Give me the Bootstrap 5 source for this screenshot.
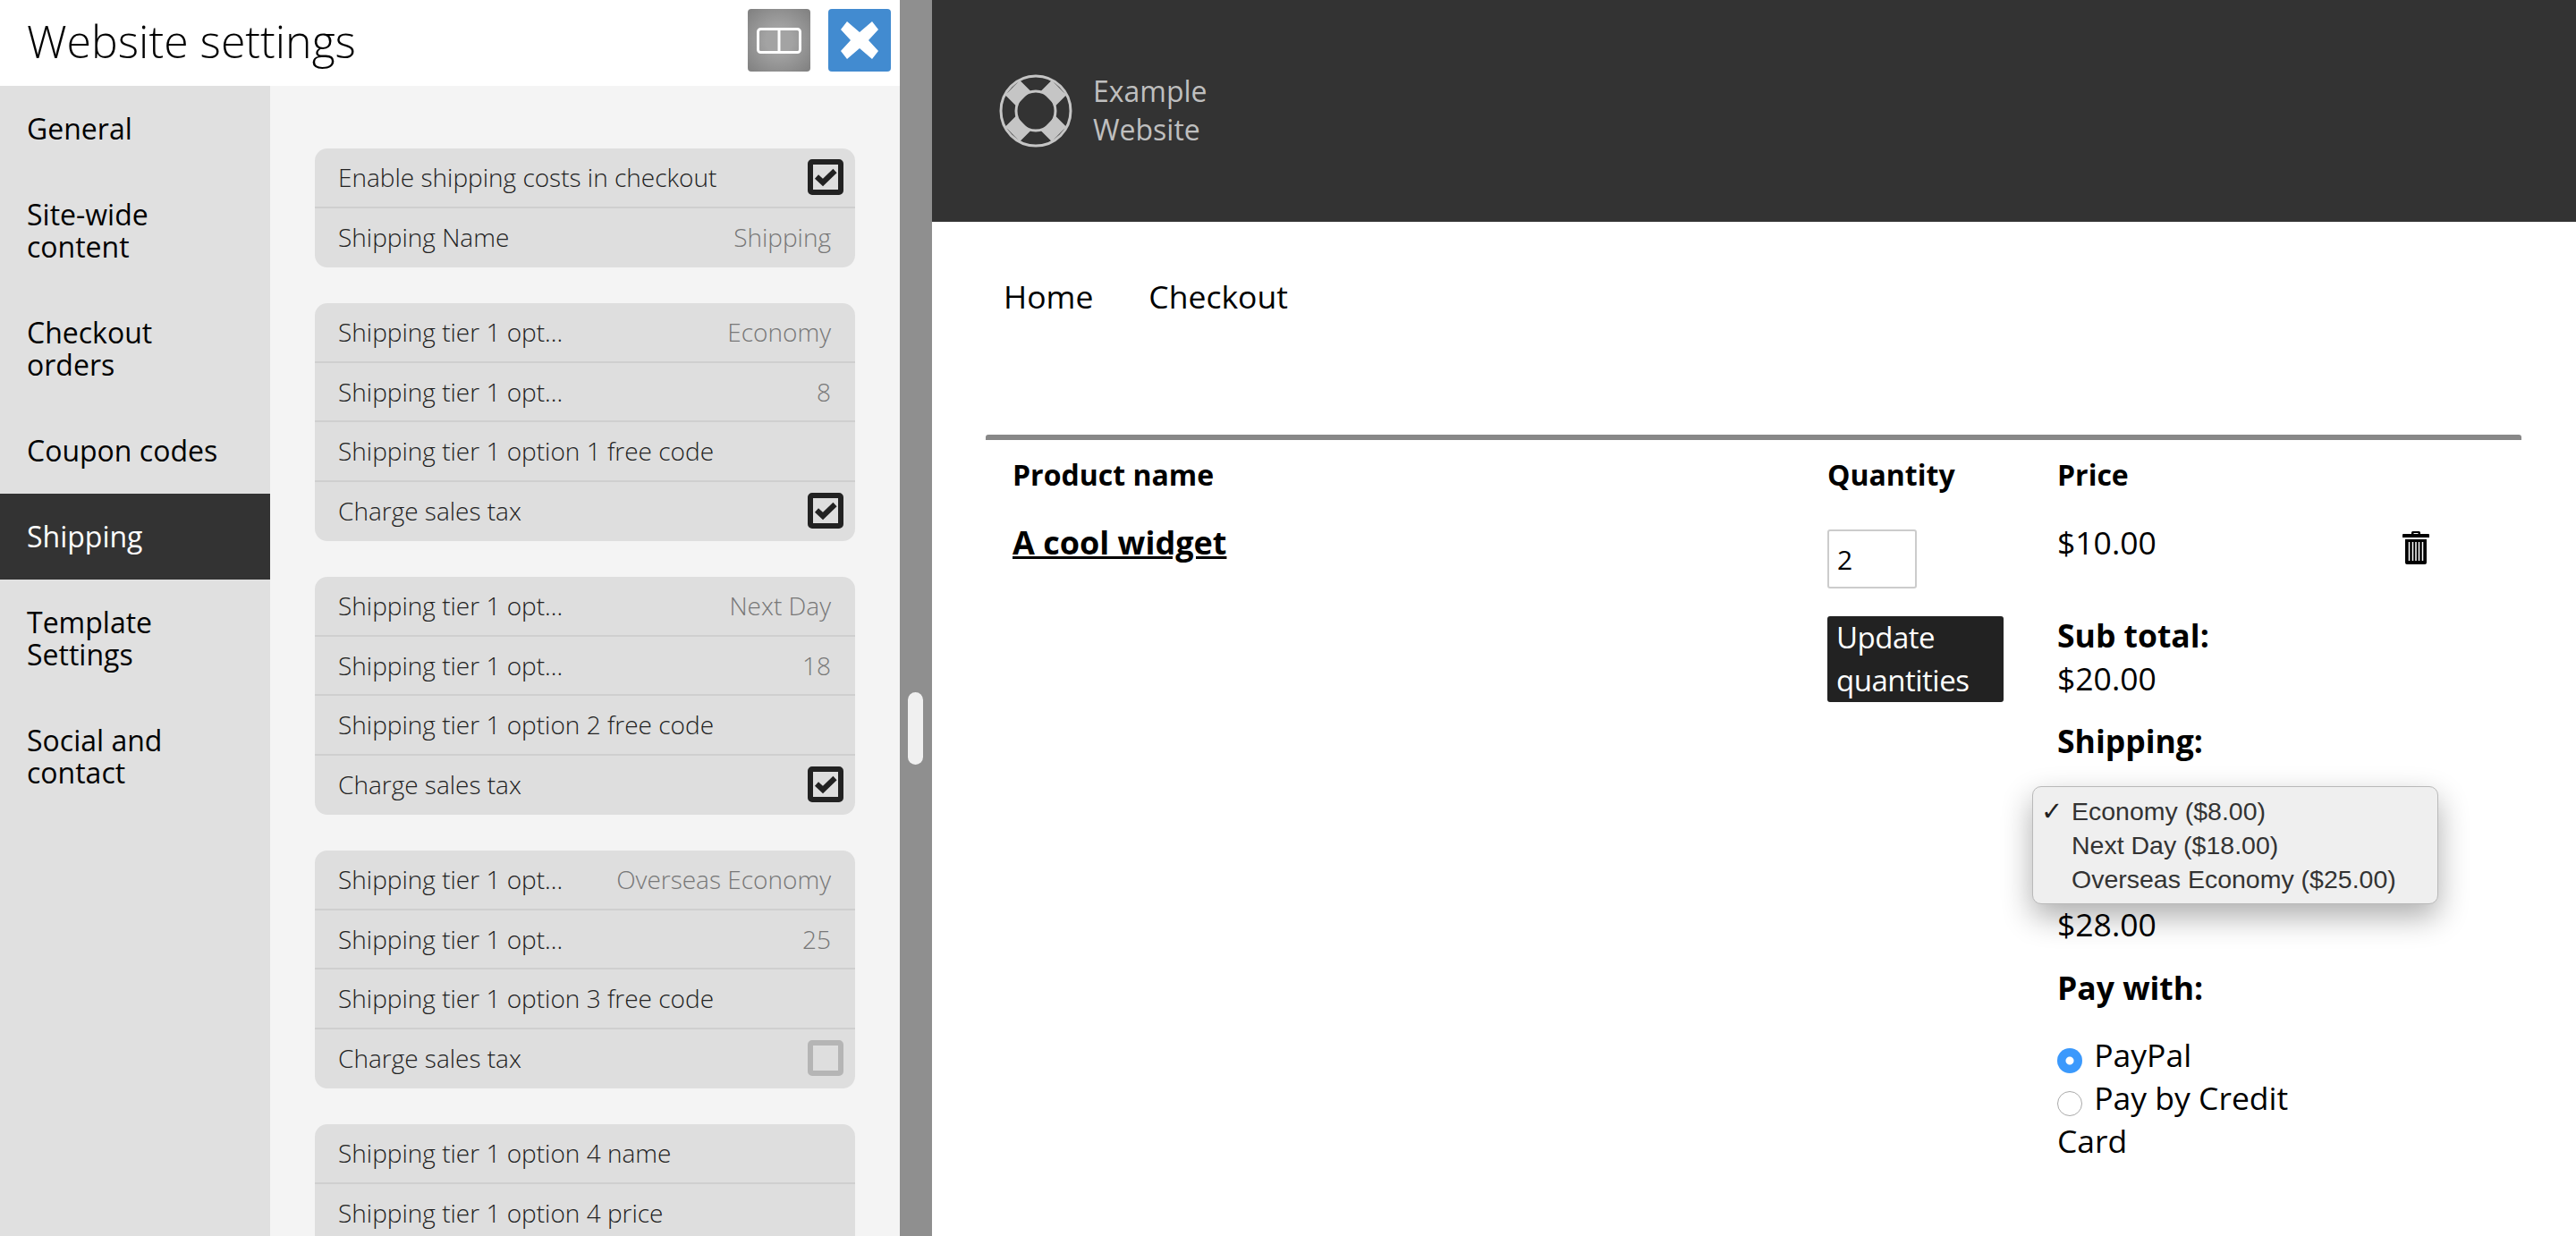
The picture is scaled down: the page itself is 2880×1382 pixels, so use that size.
<!DOCTYPE html>
<html lang="en">

<head>
    <meta charset="UTF-8">
    <meta name="viewport" content="width=device-width, initial-scale=1.0">
    <title>Website settings</title>
    <link href="https://cdn.jsdelivr.net/npm/bootstrap@5.3.2/dist/css/bootstrap.min.css" rel="stylesheet">

    <style>
        html, body {
            height: 100%;
            overflow: hidden;
        }

        body {
            font-family: "Open Sans", sans-serif;
            font-size: 35px;
            line-height: 48px;
            color: #000;
        }

        /* settings panel */
        .settings-pane {
            width: 1006px;
            flex: none;
        }

        .settings-head {
            height: 96px;
            flex: none;
            padding: 10px 10px 0 30px;
            background: #fff;
        }

        .settings-title {
            font-size: 50px;
            font-weight: 300;
            line-height: 72px;
            margin: 0;
        }

        .head-btn {
            width: 70px;
            height: 70px;
            padding: 0;
            border: 0;
            border-radius: 4px;
        }

        .head-btn-layout {
            background: radial-gradient(circle, #a3a3a3 30%, #7f7f7f 100%);
            margin-right: 20px;
        }

        .head-btn-close {
            background: #428bd0;
        }

        .settings-side {
            width: 302px;
            flex: none;
            background: #e0e0e0;
        }

        .settings-side .nav-link {
            padding: 30px 50px 30px 30px;
            font-size: 32px;
            line-height: 36px;
            color: #000;
        }

        .settings-side .nav-link.active {
            background: #333;
            color: #fff;
        }

        .settings-body {
            background: #f4f4f4;
            padding: 70px 50px 0;
        }

        .opt-group {
            --bs-list-group-bg: #dedede;
            --bs-list-group-border-width: 0;
            --bs-list-group-border-radius: 14px;
            margin-bottom: 40px;
        }

        .opt-group .list-group-item {
            height: 66.5px;
            padding: 0 13px 0 26px;
            border-bottom: 2px solid #cfcfcf;
            font-size: 28px;
            font-weight: 300;
            line-height: 40px;
            color: #222;
        }

        .opt-group .list-group-item:last-child {
            border-bottom-color: transparent;
        }

        .opt-value {
            color: #777;
            padding-right: 14px;
        }

        .tick-box {
            width: 40px;
            height: 40px;
            border: 6px solid #222;
            border-radius: 5px;
        }

        .tick-box svg {
            overflow: visible;
        }

        .tick-box-off {
            border-color: #b5b5b5;
        }

        .pane-splitter {
            width: 36px;
            flex: none;
            background: #8f8f8f;
            padding-top: 774px;
        }

        .splitter-thumb {
            width: 17px;
            height: 81px;
            margin-left: 9px;
            border-radius: 9px;
            background: #f0f0f0;
        }

        /* example site */
        .site-head {
            height: 248px;
            background: #333;
            padding: 83px 0 0 75px;
            color: #bfbfbf;
            font-size: 32px;
            line-height: 43px;
        }

        .site-name {
            margin: -3px 0 0 23px;
        }

        .site-nav {
            padding: 59px 0 0 80px;
            gap: 62px;
        }

        .site-nav .nav-link {
            padding: 0;
            font-size: 35.500px;
            line-height: 48px;
            color: #000;
        }

        .cart-wrap {
            margin: 131px 61px 0 60px;
            border-top: 6px solid #888;
            border-radius: 3px;
        }

        .cart-table {
            --bs-table-bg: transparent;
            --bs-table-color: #000;
            table-layout: fixed;
            margin: 0;
        }

        .cart-table th, .cart-table td {
            padding: 0 30px;
            font-size: 32px;
            line-height: 48px;
            vertical-align: top;
        }

        .cart-table th {
            padding-top: 15px;
            padding-bottom: 27px;
            font-weight: 700;
        }

        .cart-table td {
            font-size: 35.500px;
            padding-top: 0;
        }

        .cell-qty { width: 258px; }
        .cell-price { width: 385px; }
        .cell-bin { width: 163px; }
        .cell-price-pad { margin-left: -1px; }

        .product-link {
            font-size: 36px;
            font-weight: 700;
            color: #000;
        }

        .qty-input {
            width: 100px;
            height: 66px;
            padding: 0 9px;
            border: 2px solid #ccc;
            border-radius: 3px;
            font-size: 30px;
            margin-top: 10px;
        }

        .update-btn {
            display: block;
            width: 197px;
            margin-top: 31px;
            padding: 0 10px;
            border: 0;
            border-radius: 3px;
            background: #222;
            color: #fff;
            font-size: 33px;
            font-weight: 400;
            line-height: 48px;
            letter-spacing: -.5px;
            text-align: left;
        }

        .sum-label {
            font-weight: 700;
            margin: 0;
        }

        .sum-block {
            margin-bottom: 23px;
        }

        .price-now {
            margin-bottom: 10px;
            height: 48px;
        }

        .sub-block {
            margin-top: 56px;
            margin-bottom: 22px;
        }

        .pay-radio {
            appearance: none;
            width: 28px;
            height: 28px;
            margin: 0 4px -7px 0;
            border: 1px solid #aaa;
            border-radius: 50%;
            background: #fff;
        }

        .pay-radio:checked {
            border: 0;
            background: radial-gradient(circle, #fff 0 4px, #3b99fc 5px);
        }

        .ship-menu {
            position: absolute;
            left: 2px;
            top: 0;
            width: 454px;
            height: 132px;
            padding: 8px 0 0 43px;
            background: #efefef;
            border: 1px solid #b9b9b9;
            border-radius: 10px;
            box-shadow: 0 14px 34px rgba(0, 0, 0, .32);
            font-family: "Liberation Sans", sans-serif;
            font-size: 28.500px;
            line-height: 38px;
            color: #333;
        }

        .ship-tick {
            position: absolute;
            left: 9px;
            color: #222;
        }

        .ship-slot {
            position: relative;
            height: 130px;
            margin-left: -30px;
        }

        .ship-label {
            margin-bottom: 27px;
        }

        .pay-label {
            margin-bottom: 27px;
        }
    </style>
</head>

<body>
    <div class="d-flex h-100">
        <div class="settings-pane d-flex flex-column">
            <div class="settings-head d-flex justify-content-between">
                <h1 class="settings-title">Website settings</h1>
                <div class="d-flex">
                    <button class="head-btn head-btn-layout d-flex align-items-center justify-content-center">
                        <svg width="50" height="29" viewBox="0 0 50 29"><rect x="1.5" y="1.5" width="47" height="26" rx="3" fill="none" stroke="#fff" stroke-width="3"/><path d="M25 2v25" stroke="#fff" stroke-width="3"/></svg>
                    </button>
                    <button class="head-btn head-btn-close d-flex align-items-center justify-content-center">
                        <svg width="44" height="42" viewBox="0 0 44 42"><path d="M8 0l14 12L36 0l7 9-11 12 11 12-7 9-14-12L8 42l-7-9 11-12L1 9z" fill="#fff"/></svg>
                    </button>
                </div>
            </div>
            <div class="d-flex flex-grow-1 overflow-hidden">
                <nav class="settings-side nav flex-column flex-nowrap">
                    <a class="nav-link" href="#">General</a>
                    <a class="nav-link" href="#">Site-wide content</a>
                    <a class="nav-link" href="#">Checkout orders</a>
                    <a class="nav-link" href="#">Coupon codes</a>
                    <a class="nav-link active" href="#">Shipping</a>
                    <a class="nav-link" href="#">Template Settings</a>
                    <a class="nav-link" href="#">Social and contact</a>
                </nav>
                <div class="settings-body flex-grow-1" id="groups"></div>
            </div>
        </div>

        <div class="pane-splitter">
            <div class="splitter-thumb"></div>
        </div>

        <div class="flex-grow-1">
            <div class="site-head d-flex">
                <svg width="82" height="82" viewBox="0 0 82 82" fill="none" stroke="#c5c5c5">
                    <circle cx="41" cy="41" r="39" stroke-width="3"/>
                    <circle cx="41" cy="41" r="22" stroke-width="3"/>
                    <path d="M27 27L15 15M55 27l12-12M27 55L15 67M55 55l12 12" stroke-width="23"/>
                </svg>
                <div class="site-name">Example<br>Website</div>
            </div>
            <nav class="site-nav nav">
                <a class="nav-link" href="#">Home</a>
                <a class="nav-link" href="#">Checkout</a>
            </nav>
            <div class="cart-wrap">
                <table class="cart-table table table-borderless">
                    <thead>
                        <tr>
                            <th>Product name</th>
                            <th class="cell-qty">Quantity</th>
                            <th class="cell-price"><span class="d-block cell-price-pad">Price</span></th>
                            <th class="cell-bin"></th>
                        </tr>
                    </thead>
                    <tbody>
                        <tr>
                            <td><a class="product-link" href="#">A cool widget</a></td>
                            <td>
                                <input class="qty-input" type="text" value="2" aria-label="Quantity">
                                <button class="update-btn">Update quantities</button>
                            </td>
                            <td>
                                <div class="cell-price-pad">
                                    <div class="price-now">$10.00</div>
                                    <div class="sub-block">
                                        <p class="sum-label">Sub total:</p>
                                        $20.00
                                    </div>
                                    <p class="sum-label ship-label">Shipping:</p>
                                    <div class="ship-slot">
                                        <div class="ship-menu">
                                            <span class="ship-tick">✓</span>
                                            Economy ($8.00)<br>
                                            Next Day ($18.00)<br>
                                            Overseas Economy ($25.00)
                                        </div>
                                    </div>
                                    <div class="sum-block">$28.00</div>
                                    <p class="sum-label pay-label">Pay with:</p>
                                    <label class="d-block"><input class="pay-radio" type="radio" name="pay" checked> PayPal</label>
                                    <label class="d-block"><input class="pay-radio" type="radio" name="pay"> Pay by Credit Card</label>
                                </div>
                            </td>
                            <td>
                                <svg class="mt-1" width="30" height="37" viewBox="0 0 30 37"><path d="M10 3V1.500Q10 0 11.500 0h7Q20 0 20 1.500V3h9q1 0 1 1v3H0V4q0-1 1-1zM12.500 3h5V2h-5zM3 9h24v26q0 2-2 2H5q-2 0-2-2z"/><path d="M7.500 12v21M11.500 12v21M15 12v21M18.500 12v21M22.500 12v21" stroke="#fff" stroke-width="1.500"/></svg>
                            </td>
                        </tr>
                    </tbody>
                </table>
            </div>
        </div>
    </div>

    <script src="https://cdn.jsdelivr.net/npm/bootstrap@5.3.2/dist/js/bootstrap.bundle.min.js"></script>
    <script>
        // option groups of the shipping panel: [label, value], value true/false is a checkbox
        const tick = '<svg width="28" height="28" viewBox="0 0 28 28"><path d="M4 13.500l7 6.500L24.500 7" fill="none" stroke="#222" stroke-width="6"/></svg>';
        const grupos = [
            [['Enable shipping costs in checkout', true], ['Shipping Name', 'Shipping']],
            [['Shipping tier 1 opt...', 'Economy'], ['Shipping tier 1 opt...', '8'], ['Shipping tier 1 option 1 free code'], ['Charge sales tax', true]],
            [['Shipping tier 1 opt...', 'Next Day'], ['Shipping tier 1 opt...', '18'], ['Shipping tier 1 option 2 free code'], ['Charge sales tax', true]],
            [['Shipping tier 1 opt...', 'Overseas Economy'], ['Shipping tier 1 opt...', '25'], ['Shipping tier 1 option 3 free code'], ['Charge sales tax', false]],
            [['Shipping tier 1 option 4 name'], ['Shipping tier 1 option 4 price'], ['Shipping tier 1 option 4 free code'], ['Charge sales tax', false]],
        ];
        document.getElementById('groups').innerHTML = grupos.map((linhas) => {
            const itens = linhas.map(([label, valor]) => {
                let direita = '';
                if (valor === true) direita = `<span class="tick-box d-flex align-items-center justify-content-center">${tick}</span>`;
                if (valor === false) direita = '<span class="tick-box tick-box-off"></span>';
                if (typeof valor === 'string') direita = `<span class="opt-value">${valor}</span>`;
                return `<div class="list-group-item d-flex justify-content-between align-items-center"><span>${label}</span>${direita}</div>`;
            }).join('');
            return `<div class="opt-group list-group">${itens}</div>`;
        }).join('');
    </script>
</body>

</html>
